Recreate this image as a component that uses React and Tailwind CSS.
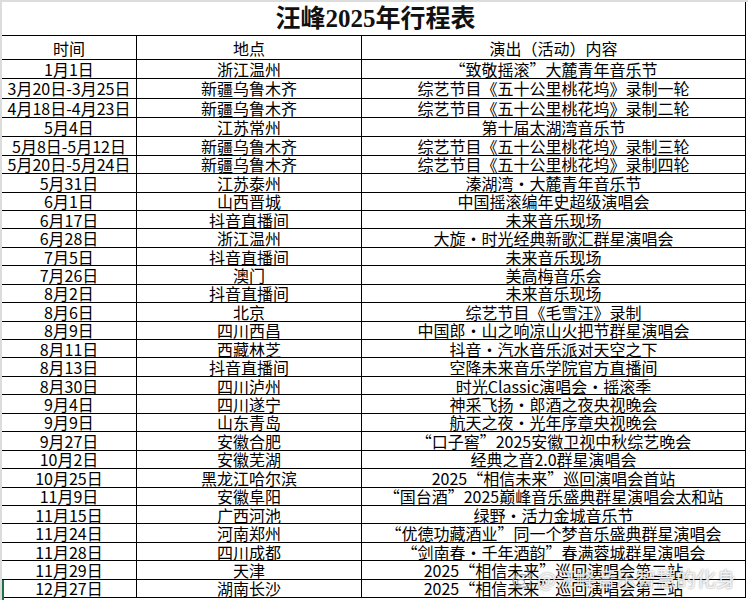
import React from "react";

const rows = [
  ["1月1日", "浙江温州", "“致敬摇滚”大麓青年音乐节"],
  ["3月20日-3月25日", "新疆乌鲁木齐", "综艺节目《五十公里桃花坞》录制一轮"],
  ["4月18日-4月23日", "新疆乌鲁木齐", "综艺节目《五十公里桃花坞》录制二轮"],
  ["5月4日", "江苏常州", "第十届太湖湾音乐节"],
  ["5月8日-5月12日", "新疆乌鲁木齐", "综艺节目《五十公里桃花坞》录制三轮"],
  ["5月20日-5月24日", "新疆乌鲁木齐", "综艺节目《五十公里桃花坞》录制四轮"],
  ["5月31日", "江苏泰州", "溱湖湾·大麓青年音乐节"],
  ["6月1日", "山西晋城", "中国摇滚编年史超级演唱会"],
  ["6月17日", "抖音直播间", "未来音乐现场"],
  ["6月28日", "浙江温州", "大旋·时光经典新歌汇群星演唱会"],
  ["7月5日", "抖音直播间", "未来音乐现场"],
  ["7月26日", "澳门", "美高梅音乐会"],
  ["8月2日", "抖音直播间", "未来音乐现场"],
  ["8月6日", "北京", "综艺节目《毛雪汪》录制"],
  ["8月9日", "四川西昌", "中国郎·山之响凉山火把节群星演唱会"],
  ["8月11日", "西藏林芝", "抖音·汽水音乐派对天空之下"],
  ["8月13日", "抖音直播间", "空降未来音乐学院官方直播间"],
  ["8月30日", "四川泸州", "时光Classic演唱会·摇滚季"],
  ["9月4日", "四川遂宁", "神采飞扬·郎酒之夜央视晚会"],
  ["9月9日", "山东青岛", "航天之夜·光年序章央视晚会"],
  ["9月27日", "安徽合肥", "“口子窖”2025安徽卫视中秋综艺晚会"],
  ["10月2日", "安徽芜湖", "经典之音2.0群星演唱会"],
  ["10月25日", "黑龙江哈尔滨", "2025“相信未来”巡回演唱会首站"],
  ["11月9日", "安徽阜阳", "“国台酒”2025巅峰音乐盛典群星演唱会太和站"],
  ["11月15日", "广西河池", "绿野·活力金城音乐节"],
  ["11月24日", "河南郑州", "“优德功藏酒业”同一个梦音乐盛典群星演唱会"],
  ["11月28日", "四川成都", "“剑南春·千年酒韵”春满蓉城群星演唱会"],
  ["11月29日", "天津", "2025“相信未来”巡回演唱会第二站"],
  ["12月27日", "湖南长沙", "2025“相信未来”巡回演唱会第三站"],
];

const cell = "flex items-center justify-center border-r border-b border-black whitespace-nowrap";

export default function App() {
  return (
    <div
      className="relative w-[748px] h-[600px] overflow-hidden bg-white border-t-2 border-l-2 border-[#dcdcdc] text-black"
      style={{ fontFamily: '"Noto Sans CJK SC", "Noto Sans", sans-serif' }}
    >
      <div className="w-[744px]">
        {/* Title */}
        <div className="h-[34px] flex items-center justify-center border-r border-b border-black">
          <h1
            className="text-[25px] font-bold leading-none text-[#111] pl-[4px]"
            style={{ fontFamily: '"Liberation Serif", "Noto Sans CJK SC", serif' }}
          >
            汪峰2025年行程表
          </h1>
        </div>

        {/* Header */}
        <div className="grid grid-cols-[135px_225px_384px] h-[24px] text-[16px] leading-none">
          <div className={cell}>时间</div>
          <div className={cell}>地点</div>
          <div className={cell}>演出（活动）内容</div>
        </div>

        {/* Rows */}
        {rows.map((r, i) => (
          <div
            key={i}
            className={
              "grid grid-cols-[135px_225px_384px] text-[16px] leading-none " +
              (i < 4 ? "h-[19.3px]" : "h-[18.45px]")
            }
          >
            <div className={cell}>{r[0]}</div>
            <div className={cell}>{r[1]}</div>
            <div className={cell}>{r[2]}</div>
          </div>
        ))}
      </div>

      {/* selection marker */}
      <div className="absolute left-0 top-[578px] w-[2px] h-[22px] bg-[#1e7145]" />

      {/* watermark */}
      <div className="absolute left-[510px] top-[567px] flex items-center gap-[3px] text-[20px] leading-none text-white/85 [text-shadow:0_0_2px_rgba(0,0,0,0.5)]">
        <svg width="22" height="18" viewBox="0 0 22 18" className="opacity-80">
          <ellipse cx="10" cy="11" rx="9" ry="6.5" fill="none" stroke="#9ca3af" strokeWidth="1.6" />
          <ellipse cx="9" cy="12" rx="3.5" ry="2.6" fill="none" stroke="#9ca3af" strokeWidth="1.3" />
          <path d="M15 2 a5 5 0 0 1 5 5" fill="none" stroke="#9ca3af" strokeWidth="1.5" />
        </svg>
        <span>@汪峰音乐智慧的化身</span>
      </div>
    </div>
  );
}
